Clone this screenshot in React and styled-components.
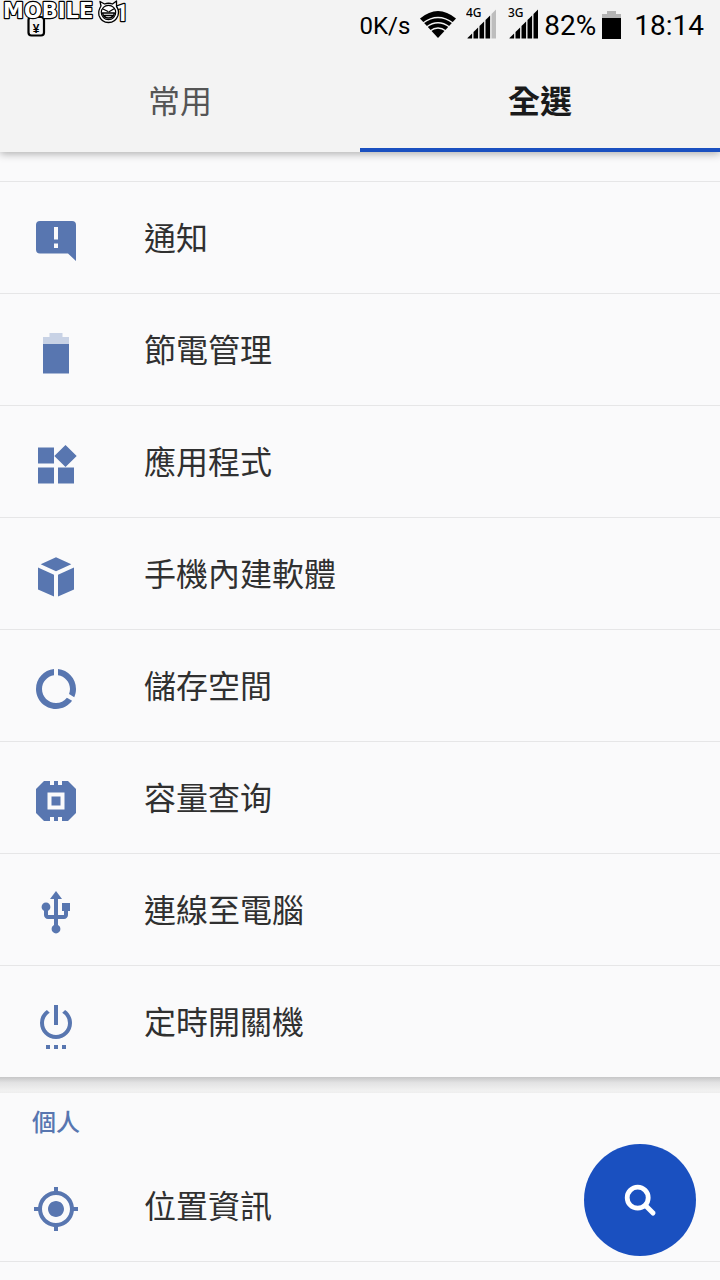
import React, { useState } from 'react'
import styled, { createGlobalStyle } from 'styled-components'
import { MdDataUsage, MdGpsFixed, MdSettingsPower, MdUsb } from 'react-icons/md'

const accent = '#1a50c0'
const iconBlue = '#5876b0'

const GlobalStyle = createGlobalStyle`
  * {
    box-sizing: border-box;
  }

  body {
    margin: 0;
    background-color: #fafafb;
    color: #303030;
    font-family: 'Noto Sans CJK TC', 'Noto Sans', sans-serif;
  }
`

const Header = styled.header`
  position: relative;
  background-color: #f3f3f3;
  box-shadow: 0 2px 8px rgba(0,0,0, .3);
`

const StatusBar = styled.div`
  display: flex;
  justify-content: space-between;
  height: 50px;
  padding-right: 16px;
  color: #000000;
  font-family: Roboto, sans-serif;
`

const StatusGroup = styled.div`
  display: flex;
  align-items: center;
  gap: ${props => props.gap}px;

  svg {
    display: block;
    flex: none;
  }
`

const StatusText = styled.span`
  padding-top: 2px;
  font-size: ${props => props.size}px;
  line-height: 32px;
  white-space: nowrap;
`

const Tabs = styled.nav`
  display: flex;
`

const Tab = styled.button`
  flex: 1;
  height: 102px;
  padding: 0 0 4px;
  border: 0;
  background: none;
  font-family: inherit;
  font-size: 32px;
  line-height: 48px;
  font-weight: ${props => props.$active ? 700 : 400};
  color: ${props => props.$active ? '#1a1a1a' : '#555555'};
  box-shadow: ${props => props.$active ? `inset 0 -4px 0 ${accent}` : 'none'};
  cursor: pointer;
`

const Section = styled.section`
  padding-top: ${props => props.$peek ? 29 : 0}px;
  background-color: #fafafb;
`

const SectionTitle = styled.h2`
  margin: 0;
  padding: 0 32px;
  font-size: 24px;
  line-height: 56px;
  font-weight: 500;
  color: ${iconBlue};
`

const Divider = styled.div`
  height: 16px;
  background: linear-gradient(#c6c6c7, #e2e2e3 35%, #f1f1f1 85%, #eeeeee);
`

const List = styled.ul`
  margin: 0;
  padding: 0;
  list-style: none;
  border-bottom: ${props => props.$closed ? '1px solid #e6e6e7' : '0'};
`

const Row = styled.li`
  border-top: 1px solid #e6e6e7;

  ${SectionTitle} + ${List} > &:first-child {
    border-top-color: transparent;
  }
`

const RowLink = styled.a`
  display: flex;
  align-items: center;
  gap: 64px;
  height: 111px;
  padding: 0 32px 4px;
  color: inherit;
  text-decoration: none;

  svg {
    flex: none;
    width: 48px;
    height: 48px;
    margin-top: 10px;
    color: ${iconBlue};
    fill: currentColor;
  }
`

const RowLabel = styled.span`
  font-size: 32px;
  line-height: 48px;
`

const SearchButton = styled.button`
  position: fixed;
  right: 24px;
  bottom: 24px;
  display: flex;
  align-items: center;
  justify-content: center;
  width: 112px;
  height: 112px;
  padding: 0;
  border: 0;
  border-radius: 50%;
  background-color: ${accent};
  cursor: pointer;
`

const Logo = () => (
  <svg width="128" height="50" viewBox="0 0 128 50">
    <rect x="28.500" y="17" width="15.500" height="18.500" rx="3" fill="none" stroke="#000" strokeWidth="2.200" />
    <text x="36" y="33" fontSize="12" fontWeight="700" textAnchor="middle" fontFamily="Liberation Sans, sans-serif">¥</text>
    <g fill="#fff" stroke="#000" strokeWidth="2.400" strokeLinejoin="round" paintOrder="stroke" fontWeight="700">
      <text x="3" y="18" fontSize="21" fontFamily="DejaVu Sans, sans-serif">MOBILE</text>
      <text x="115" y="21" fontSize="24" fontFamily="Roboto, sans-serif">1</text>
    </g>
    <g stroke="#000" strokeLinecap="round" strokeLinejoin="round">
      <path d="M101 6 100 1.500l4.500 2.500q4-1.500 8 0l4-3v5.500q3 4 1.500 9-2.500 7-9.500 7t-9.500-7q-1-5 2-9.500z" fill="#fff" strokeWidth="1.300" />
      <circle cx="108.500" cy="12.500" r="7.200" fill="none" strokeWidth="1.200" />
      <path d="m103 9 5 2.500M114.500 8.500l-5 3M102.500 13h12q-1 5-6 5t-6-5zM104 15.500h9" fill="none" strokeWidth="1.300" />
    </g>
  </svg>
)

const WifiIcon = () => (
  <svg width="36" height="28" viewBox="0 0 36 28">
    <path d="M0 7.500Q18-7.500 36 7.500L18 27z" />
    <g fill="none" stroke="#f3f3f3" strokeWidth="1.300">
      <path d="M3 12q15-11 30 0" />
      <path d="M6.500 16q11.500-8.500 23 0" />
      <path d="M10 20q8-6 16 0" />
    </g>
  </svg>
)

const SignalIcon = ({ label, level }) => (
  <svg width="30" height="42" viewBox="0 0 30 42">
    <text x="0" y="13" fontSize="12" fontWeight="500" fontFamily="Noto Sans, sans-serif">{label}</text>
    {[0, 1, 2, 3, 4].map(i => (
      <path
        key={i}
        fill={i < level ? '#000' : '#bdbdbd'}
        d={`M${1.5 + i * 6} 34.500V${34 - i * 6}l4.600-4.600V34.500z`}
      />
    ))}
  </svg>
)

const StatusBattery = () => (
  <svg width="20" height="28" viewBox="0 0 20 28">
    <path d="M5 0h9v3h5v5H0V3h5z" fill="#b4b4b4" />
    <path d="M0 7h19v21H0z" />
  </svg>
)

const NoticeIcon = () => (
  <svg viewBox="0 0 48 48">
    <path fillRule="evenodd" d="M8 4h32a4 4 0 0 1 4 4v36l-8-7.500H8a4 4 0 0 1-4-4V8a4 4 0 0 1 4-4zM22 10v12.500h4V10zM22 26.500v4.500h4v-4.500z" />
  </svg>
)

const BatteryIcon = () => (
  <svg viewBox="0 0 48 48">
    <path d="M17.500 4h13v4H37v7H11V8h6.500z" fill="#c8d2e5" />
    <path d="M11 15h26v29.500H11z" />
  </svg>
)

const AppsIcon = () => (
  <svg viewBox="0 0 48 48">
    <path d="M6 6.500h16v16H6zM6 26.500h16v16H6zM26 26.500h16v16H26zM33.500 4 44.700 15 33.500 26 22.300 15z" />
  </svg>
)

const CubeIcon = () => (
  <svg viewBox="0 0 48 48">
    <path d="m24 4.300 15.300 6.900L24 18.300 8.700 11.200zM6 14.500l16 7.300v21.700L6 36.500zM42 14.500l-16 7.300v21.700l16-7z" />
  </svg>
)

const ChipIcon = () => (
  <svg viewBox="0 0 48 48">
    <path fillRule="evenodd" d="M12 4h6v4h4V4h4v4h4V4h6l8 8v24l-8 8h-6v-4h-4v4h-4v-4h-4v4h-6l-8-8V12zM15.500 15.500v17h17v-17zM19.500 19.500h9v9h-9z" />
  </svg>
)

const SearchIcon = () => (
  <svg width="36" height="36" viewBox="0 0 36 36" fill="none" stroke="#fff">
    <circle cx="15.700" cy="15.700" r="10.500" strokeWidth="4.800" />
    <path d="m23.500 23.500 7.500 7.500" strokeWidth="5" strokeLinecap="round" />
  </svg>
)

const deviceItems = [
  { name: '通知', icon: NoticeIcon },
  { name: '節電管理', icon: BatteryIcon },
  { name: '應用程式', icon: AppsIcon },
  { name: '手機內建軟體', icon: CubeIcon },
  { name: '儲存空間', icon: MdDataUsage },
  { name: '容量查询', icon: ChipIcon },
  { name: '連線至電腦', icon: MdUsb },
  { name: '定時開關機', icon: MdSettingsPower },
]

const personalItems = [{ name: '位置資訊', icon: MdGpsFixed }]

const SettingsList = ({ items, closed }) => (
  <List $closed={closed}>
    {items.map(({ name, icon: Icon }) => (
      <Row key={name}>
        <RowLink href="#">
          <Icon aria-hidden="true" />
          <RowLabel>{name}</RowLabel>
        </RowLink>
      </Row>
    ))}
  </List>
)

const App = () => {
  const [tab, setTab] = useState('全選')

  return (
    <>
      <GlobalStyle />
      <Header>
        <StatusBar>
          <Logo />
          <StatusGroup gap={12}>
            <StatusGroup gap={6}>
              <StatusGroup gap={10}>
                <StatusText size={24}>0K/s</StatusText>
                <WifiIcon />
                <StatusGroup gap={12}>
                  <SignalIcon label="4G" level={4} />
                  <SignalIcon label="3G" level={5} />
                </StatusGroup>
              </StatusGroup>
              <StatusText size={28}>82%</StatusText>
              <StatusBattery />
            </StatusGroup>
            <StatusText size={28}>18:14</StatusText>
          </StatusGroup>
        </StatusBar>
        <Tabs role="tablist">
          {['常用', '全選'].map(name => (
            <Tab key={name} role="tab" aria-selected={tab === name} $active={tab === name} onClick={() => setTab(name)}>
              {name}
            </Tab>
          ))}
        </Tabs>
      </Header>
      <main>
        <Section $peek>
          <SettingsList items={deviceItems} />
        </Section>
        <Divider />
        <Section>
          <SectionTitle>個人</SectionTitle>
          <SettingsList items={personalItems} closed />
        </Section>
      </main>
      <SearchButton aria-label="搜尋">
        <SearchIcon />
      </SearchButton>
    </>
  )
}

export default App
